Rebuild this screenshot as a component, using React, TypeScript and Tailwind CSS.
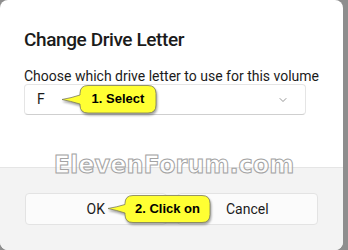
import React from "react";
import { ChevronDown } from "lucide-react";

const uiFont = { fontFamily: '"Segoe UI", Roboto, sans-serif' };

function Callouts() {
  return (
    <>
      <svg
        className="absolute inset-0 w-full h-full pointer-events-none drop-shadow-[1px_2px_1px_rgba(0,0,0,0.35)]"
        viewBox="0 0 348 250"
      >
        {/* 1. Select */}
        <path
          d="M88 85.5 H148 Q156 85.5 156 93.5 V105 Q156 113 148 113 H88 Q80 113 80 105 V104 Q70 101 62 99.5 Q71 98 80 95 V93.5 Q80 85.5 88 85.5 Z"
          fill="#ffff33"
          stroke="#7a7a5a"
          strokeWidth={0.8}
        />
        {/* 2. Click on */}
        <path
          d="M133 195.5 H202 Q210 195.5 210 203.5 V214.5 Q210 222.5 202 222.5 H133 Q125 222.5 125 214.5 V213 Q116 210 108 208.5 Q117 207 125 204.5 V203.5 Q125 195.5 133 195.5 Z"
          fill="#ffff33"
          stroke="#7a7a5a"
          strokeWidth={0.8}
        />
      </svg>
      <span
        className="absolute left-[80px] top-[85px] w-[76px] h-[28px] flex items-center justify-center text-[13px] font-bold text-black"
        style={{ fontFamily: '"Liberation Sans", Arial, sans-serif' }}
      >
        1. Select
      </span>
      <span
        className="absolute left-[125px] top-[195px] w-[85px] h-[28px] flex items-center justify-center text-[13px] font-bold text-black"
        style={{ fontFamily: '"Liberation Sans", Arial, sans-serif' }}
      >
        2. Click on
      </span>
    </>
  );
}

export default function App() {
  return (
    <div className="relative w-[348px] h-[250px] bg-[#8e8e8e] overflow-hidden" style={uiFont}>
      <div className="w-[343px] h-[250px] bg-white rounded-lg overflow-hidden flex flex-col">
        {/* Body */}
        <div className="px-6 pt-[26px] h-[167px]">
          <h1 className="text-[19px] leading-[28px] tracking-[-0.4px] font-medium text-[#1b1b1b] whitespace-nowrap">Change Drive Letter</h1>
          <p className="mt-[12px] text-[14px] leading-[20px] text-[#1b1b1b] whitespace-nowrap">
            Choose which drive letter to use for this volume
          </p>
          <div className="mt-[-2px] w-[282px] h-[31px] rounded-[4px] border border-[#e5e5e5] border-b-[#cfcfcf] bg-white flex items-center justify-between pl-[12px] pr-[16px]">
            <span className="text-[14px] text-[#1b1b1b]">F</span>
            <ChevronDown size={12} strokeWidth={1.3} className="text-[#5f5f5f]" />
          </div>
        </div>

        {/* Footer */}
        <div className="flex-1 bg-[#f3f3f3] border-t border-[#e5e5e5] px-[25px] pt-[25px] flex gap-[10px]">
          <button className="w-[143px] h-[32px] rounded-[4px] bg-[#fbfbfb] border border-[#e3e3e3] text-[14px] text-[#1b1b1b]">
            OK
          </button>
          <button className="w-[143px] h-[32px] rounded-[4px] bg-[#fbfbfb] border border-[#e3e3e3] text-[14px] text-[#1b1b1b]">
            Cancel
          </button>
        </div>
      </div>

      {/* Watermark */}
      <div
        className="absolute left-0 w-[348px] top-[149px] text-center text-[24px] leading-[32px] font-bold text-white/70 [-webkit-text-stroke:1px_#a3a3a3] pointer-events-none"
        style={{ fontFamily: '"DejaVu Sans", Verdana, sans-serif' }}
      >
        ElevenForum.com
      </div>

      <Callouts />
    </div>
  );
}
